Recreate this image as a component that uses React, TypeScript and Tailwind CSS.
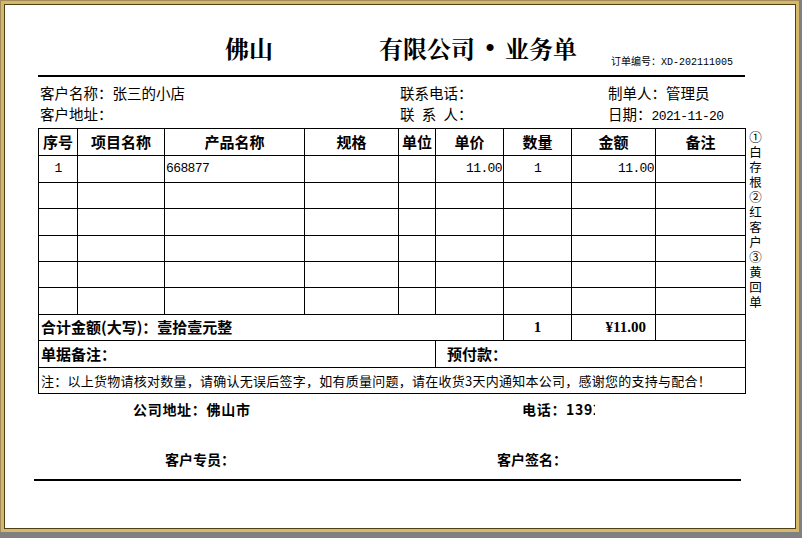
import React from "react";

const cols = [39, 87, 140, 94, 37, 68, 68, 84, 90];
const heads = ["序号", "项目名称", "产品名称", "规格", "单位", "单价", "数量", "金额", "备注"];
const dataHeights = [27, 26, 27, 26, 26, 27];
const side = ["①", "白", "存", "根", "②", "红", "客", "户", "③", "黄", "回", "单"];

const cn = "font-['Noto_Sans_CJK_SC',sans-serif]";
const mono = "font-['Liberation_Mono','Noto_Sans_CJK_SC',monospace]";

export default function App() {
  return (
    <div className="w-[802px] h-[538px] bg-[#808080]">
      <div className="w-[799px] h-[532px] border-t border-l border-[#a48b5a]">
        <div className="w-full h-full border-[3px] border-[#d6b86a]">
          <div className={`w-full h-full border border-[#4f3f16] bg-white pl-[33px] text-black ${cn}`}>
            {/* header */}
            <div className="w-[707px] h-[70px] flex items-end">
              <div className="ml-[187px] mb-[12px] flex items-center text-[24px] leading-[30px] font-bold font-['Noto_Serif_CJK_SC','Noto_Sans_CJK_SC',serif]">
                <span>佛山</span>
                <span className="ml-[106px]">有限公司</span>
                <span className="inline-block w-[30px] text-center font-['Liberation_Serif',serif] text-[26px]">•</span>
                <span>业务单</span>
              </div>
              <div className="ml-auto mr-[12px] mb-[6px] text-[10px] leading-[12px] whitespace-nowrap">
                订单编号：<span className={mono}>XD-202111005</span>
              </div>
            </div>
            <div className="w-[707px] h-[2px] bg-black" />
            {/* info */}
            <div className="mt-[5px] w-[707px] text-[14.5px] leading-[21px]">
              <div className="flex h-[21px] pl-[2px]">
                <span className="w-[360px]">客户名称：张三的小店</span>
                <span className="w-[208px]">联系电话：</span>
                <span>制单人：管理员</span>
              </div>
              <div className="flex h-[21px] pl-[2px]">
                <span className="w-[360px]">客户地址：</span>
                <span className="w-[208px]">联{"\u2002"}系{"\u2002"}人：</span>
                <span>
                  日期：<span className={`${mono} text-[13px] tracking-[-0.6px]`}>2021-11-20</span>
                </span>
              </div>
            </div>
            {/* table + side */}
            <div className="mt-[4px] flex items-start">
              <div className="w-[708px] border-t border-l border-black">
                <div className="flex h-[27px] border-b border-black">
                  {heads.map((h, i) => (
                    <div
                      key={h}
                      className="h-full border-r border-black flex items-center justify-center text-[15px] font-bold"
                      style={{ width: cols[i] }}
                    >
                      {h}
                    </div>
                  ))}
                </div>
                {dataHeights.map((rh, r) => (
                  <div key={r} className="flex border-b border-black" style={{ height: rh }}>
                    {cols.map((w, i) => {
                      let content: React.ReactNode = null;
                      let align = "justify-center";
                      if (r === 0) {
                        if (i === 0) content = "1";
                        if (i === 2) {
                          content = "668877";
                          align = "justify-start pl-[1px]";
                        }
                        if (i === 5 || i === 7) {
                          content = "11.00";
                          align = "justify-end pr-[1px]";
                        }
                        if (i === 6) content = "1";
                      }
                      return (
                        <div
                          key={i}
                          className={`h-full border-r border-black flex items-center ${align} ${mono} text-[13px] tracking-[-0.6px]`}
                          style={{ width: w }}
                        >
                          {content}
                        </div>
                      );
                    })}
                  </div>
                ))}
                {/* total */}
                <div className="flex h-[26px] border-b border-black text-[15px] font-bold">
                  <div className="w-[465px] h-full border-r border-black flex items-center pl-[2px]">
                    合计金额(大写)：壹拾壹元整
                  </div>
                  <div className="w-[68px] h-full border-r border-black flex items-center justify-center font-['Liberation_Serif',serif] text-[15px]">
                    1
                  </div>
                  <div className="w-[84px] h-full border-r border-black flex items-center justify-end pr-[9px] font-['Liberation_Serif',serif] text-[15px]">
                    ¥11.00
                  </div>
                  <div className="w-[90px] h-full border-r border-black" />
                </div>
                {/* remark */}
                <div className="flex h-[27px] border-b border-black text-[15px] font-bold">
                  <div className="w-[397px] h-full border-r border-black flex items-center pl-[2px]">单据备注：</div>
                  <div className="w-[310px] h-full border-r border-black flex items-center pl-[11px]">预付款：</div>
                </div>
                {/* note */}
                <div className="flex h-[26px] border-b border-black">
                  <div className="w-[707px] h-full border-r border-black flex items-center pl-[2px] text-[13px] tracking-[0.25px] whitespace-nowrap">
                    注：以上货物请核对数量，请确认无误后签字，如有质量问题，请在收货3天内通知本公司，感谢您的支持与配合！
                  </div>
                </div>
              </div>
              <div className="ml-[3px] pt-[1px] flex flex-col text-[12.5px] leading-[15px]">
                {side.map((c, i) => (
                  <span key={i} className="block w-[13px] h-[15px] text-center">
                    {c}
                  </span>
                ))}
              </div>
            </div>
            {/* footer */}
            <div className="mt-[5px] flex h-[20px] leading-[20px] pl-[95px] text-[14px] font-bold tracking-[0.7px]">
              <span className="w-[389px] whitespace-nowrap">公司地址：佛山市</span>
              <span className="w-[73px] overflow-hidden whitespace-nowrap">电话：13926</span>
            </div>
            <div className="mt-[30px] flex h-[20px] leading-[20px] pl-[127px] text-[14px] font-bold">
              <span className="w-[332px] whitespace-nowrap">客户专员：</span>
              <span className="whitespace-nowrap">客户签名：</span>
            </div>
            <div className="mt-[10px] ml-[-4px] w-[707px] h-[2px] bg-black" />
          </div>
        </div>
      </div>
    </div>
  );
}
